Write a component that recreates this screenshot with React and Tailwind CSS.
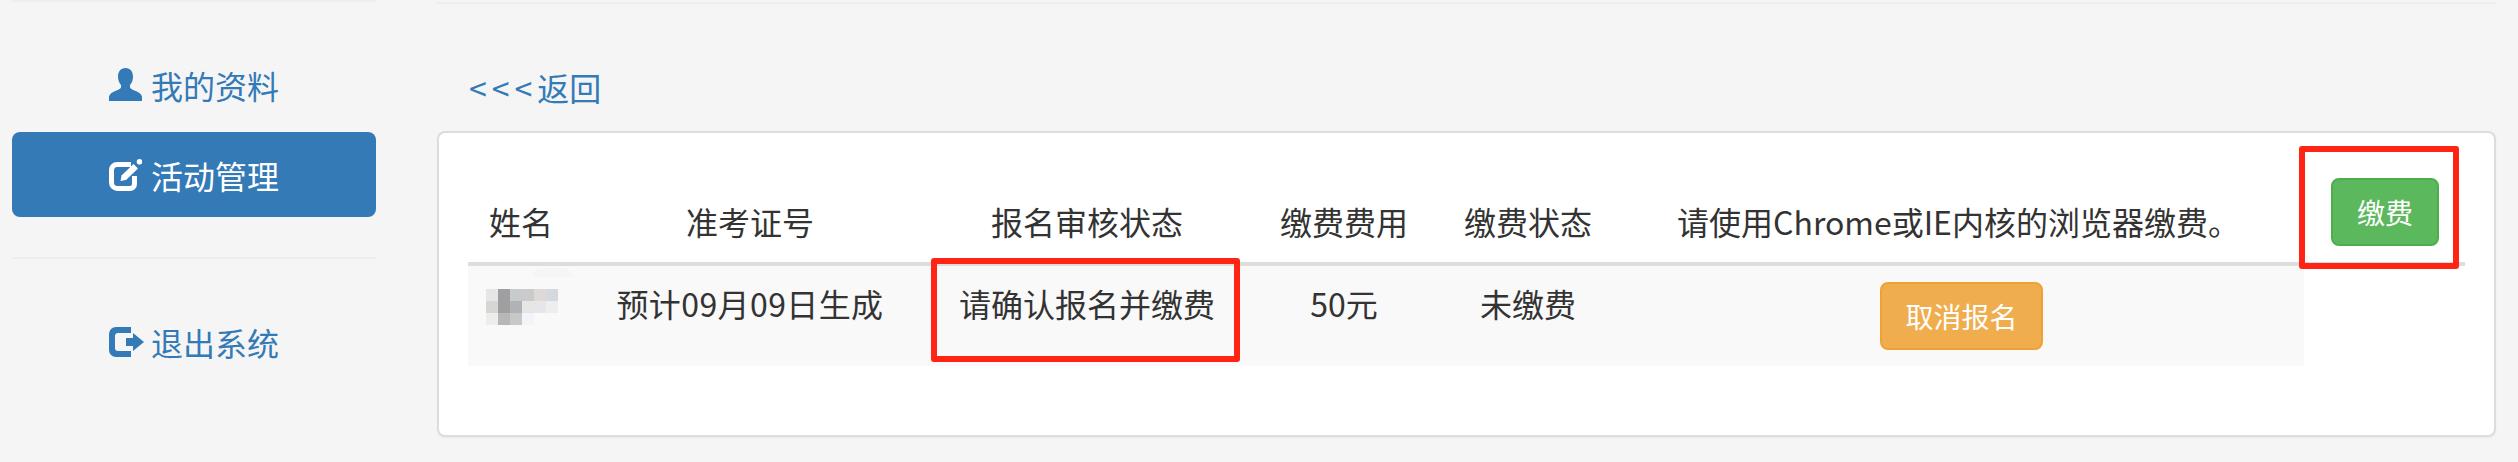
const font = { fontFamily: '"Noto Sans CJK SC", "Noto Sans", sans-serif' };

const UserIcon = () => (
  <svg width="33" height="33" viewBox="0 0 33 33" className="shrink-0">
    <path fill="currentColor" d="M16.5 0C11.5 0 9 3.8 9 8.5c0 3.4 1 6.3 3 8.4v2.6c-.3 1.2-2 2-4.500 3C3.500 24.200 .6 25.800 0 28.500V33h33v-4.500c-.6-2.700-3.500-4.300-7.500-6-2.500-1-4.200-1.800-4.500-3v-2.600c2-2.100 3-5 3-8.400C24 3.800 21.500 0 16.500 0z" />
  </svg>
);

const EditIcon = () => (
  <svg width="33" height="32" viewBox="0 0 33 32" className="shrink-0">
    <path fill="none" stroke="currentColor" strokeWidth="5" d="M22 5.500H8a5.500 5.500 0 0 0-5.500 5.500v12.500A6 6 0 0 0 8.500 29.500h12.500a4.500 4.500 0 0 0 4.500-4.500V17" />
    <path fill="currentColor" d="M24.500 5l4.500 4.500L17 21l-5.500 1 1-5.500z" />
    <circle cx="30.500" cy="2.800" r="2.800" fill="currentColor" />
  </svg>
);

const LogoutIcon = () => (
  <svg width="35" height="30" viewBox="0 0 35 30" className="shrink-0 -mr-[2px]">
    <path fill="currentColor" d="M7 0h15v6H9a3 3 0 0 0-3 3v12a3 3 0 0 0 3 3h13v6H7a7 7 0 0 1-7-7V7a7 7 0 0 1 7-7z" />
    <path fill="currentColor" d="M24 6l11 9-11 9v-5h-7v-8h7z" />
  </svg>
);

const mosaic = [
  ["#e6e6e6", "#9f9fa1", "#c8cbcb", "#cbcbcb", "#dcd9d7", "#d4d9e0"],
  ["#d6d6d5", "#a09ea0", "#b0b3b5", "#e6e6e5", "#e4e6e9", "#eeeeee"],
  ["#eeedec", "#b7b7b8", "#c8c8c9", "#f3f4f6", "#f9f9f9", "#f9f9f9"],
];

function Mosaic() {
  return (
    <div className="absolute left-[18px] top-[23px] grid grid-cols-[repeat(6,12px)] auto-rows-[12px]">
      {mosaic.flat().map((c, i) => (
        <div key={i} className="w-[12px] h-[12px]" style={{ backgroundColor: c }} />
      ))}
    </div>
  );
}

function NavItem({ icon, label, active }) {
  return (
    <a
      className={
        active
          ? "flex items-center justify-center gap-[9px] h-[85px] rounded-lg bg-[#337ab7] text-white"
          : "flex items-center justify-center gap-[9px] h-[85px] rounded-lg text-[#337ab7]"
      }
    >
      {icon}
      <span>{label}</span>
    </a>
  );
}

const th = "p-0 h-[104px] align-bottom pb-[16px] text-center font-normal leading-[49px] border-b-4 border-[#dddddd]";
const td = "p-0 pt-[16px] pb-[16px] align-top text-center leading-[43px] bg-[#f9f9f9] h-[100px]";

export default function App() {
  return (
    <div style={font} className="relative w-[2518px] h-[462px] overflow-hidden bg-[#f5f5f5] text-[32px] text-[#333333] flex">
      <aside className="w-[364px] ml-[12px] shrink-0">
        <div className="h-[2px] bg-[#eeeeee]" />
        <nav className="pt-[40px] flex flex-col gap-[5px]">
          <NavItem icon={<UserIcon />} label="我的资料" />
          <NavItem icon={<EditIcon />} label="活动管理" active />
        </nav>
        <div className="h-[2px] bg-[#eeeeee] mt-[40px] mb-[40px]" />
        <NavItem icon={<LogoutIcon />} label="退出系统" />
      </aside>

      <main className="ml-[61px] flex-1 min-w-0">
        <div className="mt-[2px] h-[2px] w-[2061px] -ml-px bg-[#eeeeee]" />
        <a className="block mt-[60px] ml-[32px] h-[47px] leading-[46px] text-[#337ab7]">
          <span className="tracking-[5px]">&lt;&lt;&lt;</span>返回
        </a>
        <div className="w-[2059px] h-[306px] mt-[20px] bg-white border-2 border-[#dddddd] rounded-lg shadow-[0_1px_2px_rgba(0,0,0,0.05)] pl-[29px] pt-[29px]">
          <div className="relative w-[1997px]">
            <table className="table-fixed border-separate border-spacing-0 w-[1997px]">
              <colgroup>
                <col className="w-[106px]" />
                <col className="w-[352px]" />
                <col className="w-[322px]" />
                <col className="w-[192px]" />
                <col className="w-[176px]" />
                <col className="w-[688px]" />
                <col className="w-[161px]" />
              </colgroup>
              <thead>
                <tr>
                  <th className={th}>姓名</th>
                  <th className={th}>准考证号</th>
                  <th className={th}>报名审核状态</th>
                  <th className={th}>缴费费用</th>
                  <th className={th}>缴费状态</th>
                  <th className={th + " pr-[3px]"}>请使用Chrome或IE内核的浏览器缴费。</th>
                  <th className={th}>
                    <button className="block ml-[27px] w-[108px] h-[68px] text-[28px] leading-[40px] font-normal text-white bg-[#5cb85c] border-2 border-[#4cae4c] rounded-lg">
                      缴费
                    </button>
                  </th>
                </tr>
              </thead>
              <tbody>
                <tr>
                  <td className={td + " relative"}>
                    <div className="absolute left-[65px] top-[2px] w-[39px] h-[9px] bg-[#f5f5f5] rounded-t-full" />
                    <Mosaic />
                  </td>
                  <td className={td + " tracking-[0.4px]"}>预计09月09日生成</td>
                  <td className={td}>请确认报名并缴费</td>
                  <td className={td}>50元</td>
                  <td className={td}>未缴费</td>
                  <td className={td}>
                    <button className="block ml-[264px] w-[163px] h-[68px] text-[28px] leading-[40px] text-white bg-[#f0ad4e] border-2 border-[#eea236] rounded-lg">
                      取消报名
                    </button>
                  </td>
                  <td className="p-0" />
                </tr>
              </tbody>
            </table>
            {/* red annotation rectangles drawn over the table */}
            <div className="absolute left-[463px] top-[96px] w-[309px] h-[104px] border-[6px] border-[#ff2414] rounded-[3px]" />
            <div className="absolute left-[1831px] top-[-16px] w-[160px] h-[123px] border-[6px] border-[#ff2414] rounded-[3px]" />
          </div>
        </div>
      </main>
    </div>
  );
}
